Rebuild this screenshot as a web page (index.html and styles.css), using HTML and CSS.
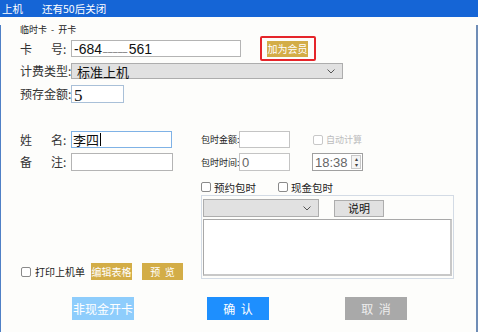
FILE: index.html
```html
<!DOCTYPE html>
<html lang="zh-CN">
<head>
    <meta charset="UTF-8">
    <title>上机</title>
    <link rel="stylesheet" href="styles.css">
</head>
<body>
    <div class="titlebar">
        <span>上机</span>
        <span>还有50后关闭</span>
    </div>
    <div class="win">
        <div class="subtitle">临时卡 &nbsp;- &nbsp;开卡</div>

        <div class="row r1">
            <span class="lbl"><i>卡</i>号:</span>
            <span class="field card">-684<u>_____</u>561</span>
            <span class="hilite"><span class="gold vip">加为会员</span></span>
        </div>
        <div class="row r2">
            <span class="lbl">计费类型:</span>
            <span class="field combo fee">标准上机<svg width="8" height="5" viewBox="0 0 8 5"><polyline points="0.5,0.5 4,4 7.5,0.5" fill="none" stroke="#555" stroke-width="1"/></svg></span>
        </div>
        <div class="row r3">
            <span class="lbl">预存金额:</span>
            <span class="field amount">5</span>
        </div>

        <div class="split">
            <div class="left">
                <div class="row">
                    <span class="lbl"><i>姓</i>名:</span>
                    <span class="field name focus">李四<b class="caret"></b></span>
                </div>
                <div class="row r5">
                    <span class="lbl"><i>备</i>注:</span>
                    <span class="field note"></span>
                </div>
                <div class="print">
                    <span class="chk"></span>
                    <span class="ptxt">打印上机单</span>
                    <span class="gold small edit">编辑表格</span>
                    <span class="gold small preview">预 &nbsp;览</span>
                </div>
            </div>
            <div class="right">
                <div class="row">
                    <span class="slbl">包时金额:</span>
                    <span class="field pkg"></span>
                    <span class="auto"><span class="chk off"></span>自动计算</span>
                </div>
                <div class="row r5">
                    <span class="slbl">包时时间:</span>
                    <span class="field pkg num">0</span>
                    <span class="field time num">18:38<span class="spin"><em>&#9652;</em><em>&#9662;</em></span></span>
                </div>
                <div class="checks">
                    <span class="opt"><span class="chk"></span>预约包时</span>
                    <span class="opt"><span class="chk"></span>现金包时</span>
                </div>
                <div class="group">
                    <div class="gtop">
                        <span class="field combo pick"><svg width="8" height="5" viewBox="0 0 8 5"><polyline points="0.5,0.5 4,4 7.5,0.5" fill="none" stroke="#555" stroke-width="1"/></svg></span>
                        <span class="explain">说明</span>
                    </div>
                    <div class="memo"></div>
                </div>
            </div>
        </div>

        <div class="actions">
            <span class="btn cashless">非现金开卡</span>
            <span class="btn ok">确 &nbsp;认</span>
            <span class="btn cancel">取 &nbsp;消</span>
        </div>
    </div>
</body>
</html>
```

FILE: styles.css
```css
*{
    margin: 0;
    padding: 0;
    box-sizing: border-box;
}
body{
    width: 478px;
    height: 332px;
    overflow: hidden;
    background: #fdfdfb;
    font-family: "Noto Sans CJK SC", "Liberation Sans", sans-serif;
    color: #333;
}
.titlebar{
    height: 17px;
    background: #1565d6;
    color: #fff;
    font-size: 10.5px;
    line-height: 17px;
    padding-left: 2px;
    display: flex;
    gap: 19px;
}
.win{
    height: 315px;
    border-left: 1px solid #4f80c6;
    border-right: 2px solid #6f8db6;
    border-bottom: 2px solid #6f8db6;
    padding-left: 19px;
}
.subtitle{
    font-size: 9px;
    line-height: 10px;
    margin-top: 8px;
    color: #222;
}
.row{
    display: flex;
    align-items: center;
    height: 17px;
}
.r1{ margin-top: 5px; }
.r2{ margin-top: 6px; height: 16px; }
.r3{ margin-top: 6px; height: 18px; }
.r5{ margin-top: 5px; height: 18px; }
.lbl{
    width: 51px;
    flex: none;
    font-size: 12px;
    line-height: 14px;
    white-space: nowrap;
    color: #333;
}
.lbl i{
    font-style: normal;
    display: inline-block;
    width: 31px;
}
.field{
    display: flex;
    align-items: center;
    height: 100%;
    background: #fff;
    border: 1px solid #b4b4b4;
    padding-left: 2px;
    font-size: 13px;
    color: #111;
    flex: none;
}
.card{
    width: 170px;
    font-family: "Liberation Sans", sans-serif;
    font-size: 14px;
}
.card u{
    text-decoration: none;
    letter-spacing: 0.5px;
    font-size: 8px;
    margin: 0 1px 0 1px;
}
.hilite{
    margin-left: 19px;
    border: 2px solid #e5252a;
    border-radius: 2px;
    padding: 3px 6px 2px 5px;
    display: flex;
}
.gold{
    background: #d3ad47;
    color: #fff;
    font-size: 10px;
    text-align: center;
    display: inline-block;
}
.vip{
    width: 41px;
    height: 16px;
    line-height: 16px;
}
.combo{
    background: #e1e1e1;
    border-color: #adadad;
    justify-content: space-between;
    padding: 0 7px 0 5px;
}
.fee{
    width: 272px;
    font-size: 13px;
}
.amount{
    width: 53px;
    border-color: #a9c0d8;
    font-family: "Liberation Serif", serif;
    font-size: 17px;
    padding-top: 3px;
}
.split{
    display: flex;
    margin-top: 28px;
    height: 149px;
}
.left{
    width: 181px;
    display: flex;
    flex-direction: column;
}
.name{
    width: 101px;
    border-color: #7fb2e6;
    padding-left: 1px;
}
.caret{
    display: inline-block;
    width: 1px;
    height: 13px;
    background: #000;
    margin-left: 1px;
}
.note{
    width: 102px;
}
.print{
    margin-top: auto;
    display: flex;
    align-items: center;
    height: 17px;
    padding-left: 1px;
}
.chk{
    display: inline-block;
    width: 10px;
    height: 10px;
    border: 1px solid #8a8a8a;
    border-radius: 2px;
    background: #fff;
    flex: none;
}
.chk.off{
    border-color: #c8c8c8;
}
.ptxt{
    font-size: 10px;
    margin-left: 4px;
    color: #222;
}
.gold.small{
    width: 41px;
    height: 17px;
    line-height: 17px;
    font-size: 10px;
}
.edit{
    margin-left: 6px;
}
.preview{
    margin-left: 10px;
}
.right{
    width: 253px;
    display: flex;
    flex-direction: column;
}
.slbl{
    width: 38px;
    flex: none;
    font-size: 9px;
    color: #222;
    white-space: nowrap;
}
.pkg{
    width: 51px;
    border-color: #c4c4c4;
}
.num{
    font-family: "Liberation Sans", sans-serif;
    font-size: 13px;
    color: #666;
}
.auto{
    margin-left: 23px;
    display: flex;
    align-items: center;
    font-size: 9px;
    color: #bbb;
}
.auto .chk{
    margin-right: 3px;
}
.time{
    width: 51px;
    margin-left: 22px;
    border-color: #a0a0a0;
    justify-content: space-between;
    padding-right: 1px;
}
.spin{
    display: flex;
    flex-direction: column;
    width: 10px;
    height: 14px;
    border: 1px solid #c8c8c8;
    background: #f4f4f4;
}
.spin em{
    font-style: normal;
    font-size: 6px;
    line-height: 6px;
    text-align: center;
    color: #444;
}
.checks{
    display: flex;
    align-items: center;
    height: 14px;
    margin-top: 9px;
}
.opt{
    display: flex;
    align-items: center;
    font-size: 10.5px;
    color: #222;
    gap: 3px;
}
.opt + .opt{
    margin-left: 22px;
}
.group{
    margin-top: 1px;
    height: 84px;
    border: 1px solid #d3dbe5;
    padding: 3px 1px 0 1px;
}
.gtop{
    display: flex;
    align-items: center;
    height: 18px;
}
.pick{
    width: 116px;
    justify-content: flex-end;
}
.explain{
    margin-left: 15px;
    width: 50px;
    height: 17px;
    border: 1px solid #adadad;
    background: #e1e1e1;
    font-size: 11px;
    line-height: 15px;
    text-align: center;
    color: #111;
}
.memo{
    margin-top: 2px;
    width: 249px;
    height: 57px;
    background: #fff;
    border: 1px solid #a8a8a8;
    border-right: 2px solid #c8c8c8;
    border-bottom: 2px solid #c8c8c8;
}
.actions{
    display: flex;
    margin-top: 17px;
    padding-left: 52px;
}
.btn{
    width: 62px;
    height: 23px;
    line-height: 23px;
    text-align: center;
    color: #fff;
    font-size: 12px;
}
.cashless{
    background: #8ecdfc;
}
.ok{
    background: #1e8ffe;
    margin-left: 73px;
}
.cancel{
    background: #a9a9a9;
    color: #eee;
    margin-left: 76px;
}
```
